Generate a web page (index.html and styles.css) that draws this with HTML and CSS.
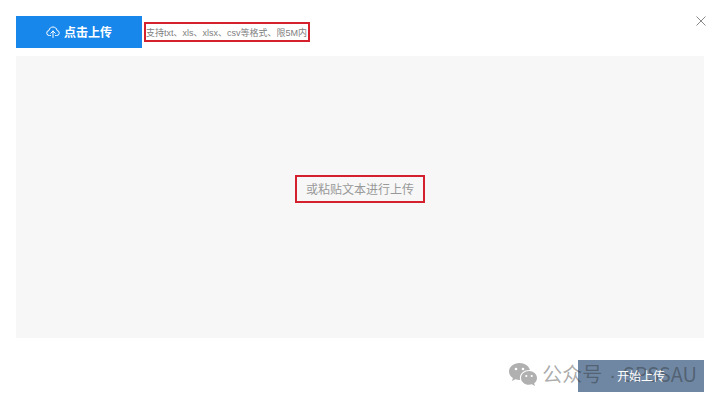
FILE: index.html
```html
<!DOCTYPE html>
<html lang="zh-CN">
<head>
    <meta charset="UTF-8">
    <title>上传数据</title>
    <link rel="stylesheet" href="styles.css">
</head>

<body>
    <div class="upload">
        <div class="header">
            <button type="button" class="btn btn-pick">
                <svg class="icon-cloud" viewBox="0 0 28 24" fill="none" stroke="currentColor" stroke-width="2" stroke-linecap="round" stroke-linejoin="round">
                    <path d="M9 19H7a5 5 0 0 1-1-10C6.500 4.500 10 2 14 2s7.500 2.500 8 7a5 5 0 0 1-1 10h-2"/>
                    <path d="M14 23V10M9.500 14.500L14 10l4.500 4.500"/>
                </svg>
                点击上传
            </button>
            <span class="hint marked">支持txt、xls、xlsx、csv等格式、限5M内</span>
            <button type="button" class="close" aria-label="关闭">
                <svg viewBox="0 0 10 10" fill="none" stroke="currentColor" stroke-width="1">
                    <path d="M.5.5l9 9M9.500.5l-9 9"/>
                </svg>
            </button>
        </div>

        <div class="paste">
            <textarea id="paste-text" class="paste-input"></textarea>
            <label for="paste-text" class="paste-label marked">或粘贴文本进行上传</label>
        </div>

        <div class="footer">
            <button type="button" class="btn btn-start"><span>开始上传</span></button>
            <div class="watermark">
                <svg class="icon-wechat" viewBox="0 0 28 24">
                    <path fill="#b0b0b0" d="M10.500 1C4.700 1 0 4.800 0 9.500c0 2.700 1.500 5 3.900 6.600L3 19l3.500-1.700c1.300.4 2.600.6 4 .6h.7a7 7 0 0 1-.3-2c0-4.400 4.300-7.900 9.600-7.900h.4C20 4 15.700 1 10.500 1z"/>
                    <path fill="#b0b0b0" d="M28 15.900c0-3.800-3.600-6.900-8-6.900s-8 3.100-8 6.900 3.600 6.900 8 6.900c1 0 2-.2 2.900-.5L26 24l-.8-2.800c1.700-1.300 2.800-3.200 2.800-5.300z"/>
                    <g fill="#fff">
                        <circle cx="7" cy="7" r="1.300"/>
                        <circle cx="14" cy="7" r="1.300"/>
                        <circle cx="17.300" cy="14" r="1.100"/>
                        <circle cx="22.700" cy="14" r="1.100"/>
                    </g>
                </svg>
                <span>公众号<span class="dot">·</span>SPSSAU</span>
            </div>
        </div>
    </div>
</body>

</html>
```

FILE: styles.css
```css
* {
    box-sizing: border-box;
}
body {
    margin: 0;
    background: #fff;
    font-family: "Noto Sans", "Noto Sans CJK SC", sans-serif;
    font-size: 12px;
}
button {
    border: 0;
    padding: 0;
    font: inherit;
    cursor: pointer;
}
.upload {
    display: flex;
    flex-direction: column;
    min-height: 100vh;
}

.header {
    display: flex;
    align-items: center;
    padding: 16px 14px 8px 16px;
}
.btn {
    display: flex;
    align-items: center;
    justify-content: center;
    gap: 4px;
    width: 126px;
    height: 32px;
    color: #fff;
}
.btn-pick {
    background: #1787eb;
    font-weight: bold;
}
.icon-cloud {
    width: 14px;
    height: 12px;
}
.marked {
    border: 2px solid #d5212e;
}
.hint {
    margin-left: 2px;
    height: 20px;
    padding-right: 1px;
    line-height: 18px;
    font-family: "Liberation Sans", "Noto Sans CJK SC", sans-serif;
    font-size: 9px;
    color: #808080;
}
.close {
    align-self: flex-start;
    margin-left: auto;
    width: 10px;
    height: 10px;
    background: none;
    color: #888;
}
.close svg {
    display: block;
}

.paste {
    position: relative;
    flex: 1;
    display: flex;
    align-items: center;
    justify-content: center;
    margin: 0 16px;
    background: #f7f7f7;
}
.paste-input {
    position: absolute;
    inset: 0;
    width: 100%;
    height: 100%;
    border: 0;
    padding: 12px;
    background: none;
    resize: none;
    outline: none;
    font: inherit;
}
.paste-label {
    position: relative;
    height: 28px;
    padding: 0 9px;
    line-height: 26px;
    margin-bottom: 16px;
    color: #999;
}

.footer {
    position: relative;
    display: flex;
    justify-content: flex-end;
    padding: 22px 16px 11px;
}
.btn-start {
    background: #6f87a3;
}
/* keeps the caption above the watermark */
.btn-start span {
    position: relative;
    z-index: 2;
}
.watermark {
    position: absolute;
    right: 23px;
    bottom: 13px;
    display: flex;
    align-items: center;
    gap: 5px;
    height: 32px;
    line-height: 32px;
    font-family: "Noto Sans CJK SC", sans-serif;
    font-size: 20px;
    color: rgba(40, 40, 40, .4);
    white-space: nowrap;
    pointer-events: none;
}
.dot {
    padding: 0 7px;
    font-family: "Liberation Sans", sans-serif;
}
.icon-wechat {
    width: 28px;
    height: 24px;
}
```
